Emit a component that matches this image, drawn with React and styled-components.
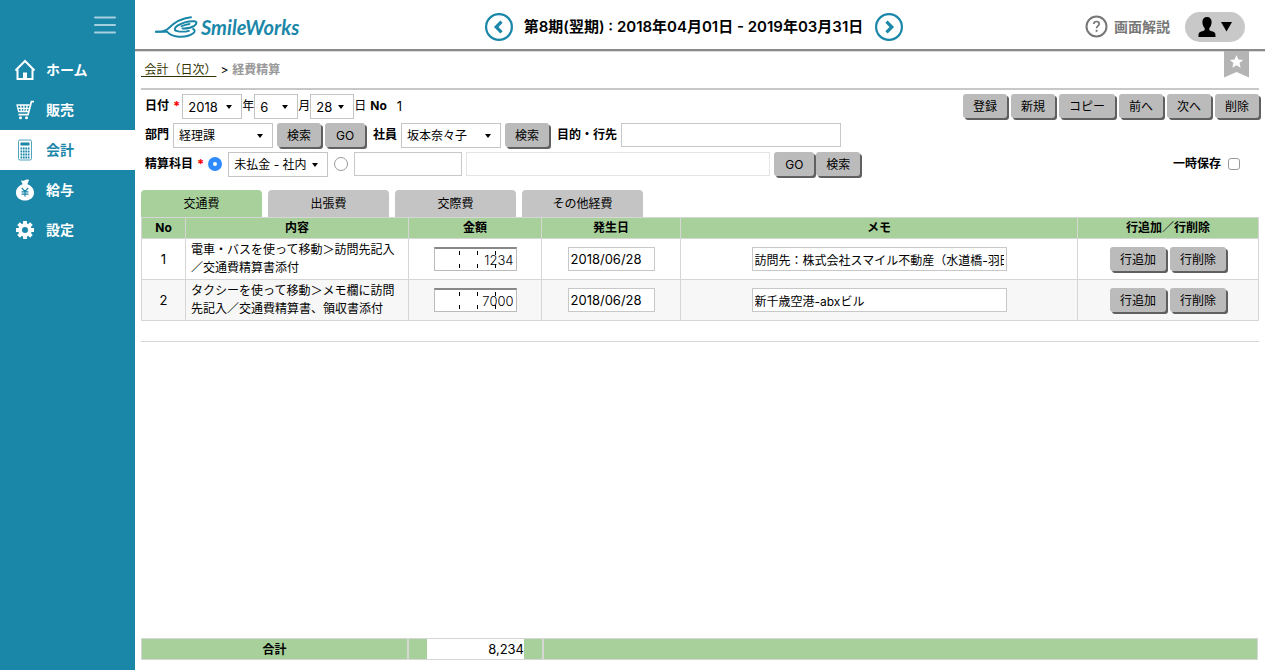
import React, { useState } from "react";
import styled, { createGlobalStyle } from "styled-components";

const teal = "#1a87a9";
const green = "#a7d09b";
const line = "#d6d6d6";

const GlobalStyle = createGlobalStyle`
  * { box-sizing: border-box; }
  body {
    margin: 0;
    background: #fff;
    color: #000;
    font-family: Inter, "Noto Sans CJK JP", sans-serif;
    font-size: 12px;
    line-height: 18px;
  }
  input, select, button { font: inherit; color: inherit; }
`;

const Page = styled.div`
  display: flex;
  min-height: 100vh;
`;

/* ---------- sidebar ---------- */
const Sidebar = styled.nav`
  flex: 0 0 135px;
  background: ${teal};
`;
const MenuBar = styled.div`
  display: flex;
  justify-content: flex-end;
  align-items: center;
  height: 50px;
  padding-right: 19px;
`;
const IconButton = styled.button`
  display: flex;
  padding: 0;
  border: 0;
  background: none;
  cursor: pointer;
`;
const NavLink = styled.a`
  display: flex;
  align-items: center;
  gap: 10px;
  height: 40px;
  padding-left: 14px;
  font-size: 14px;
  font-weight: 700;
  text-decoration: none;
  color: ${(p) => (p.$active ? teal : "#fff")};
  background: ${(p) => (p.$active ? "#fff" : "transparent")};
`;

/* ---------- header ---------- */
const Main = styled.main`
  flex: 1;
  min-width: 0;
  display: flex;
  flex-direction: column;
`;
const Header = styled.header`
  display: flex;
  align-items: center;
  justify-content: space-between;
  height: 51px;
  padding: 4px 20px 0;
  border-bottom: 2px solid #8a8a8a;
  box-shadow: 0 1px 0 #dcdcdc;
`;
const Logo = styled.a`
  display: flex;
  align-items: center;
  gap: 3px;
  width: 147px;
  color: ${teal};
  font-family: Lato, sans-serif;
  font-size: 20px;
  font-weight: 700;
  font-style: italic;
  text-decoration: none;
`;
const Period = styled.div`
  display: flex;
  align-items: center;
  gap: 6px;
`;
const PeriodTitle = styled.h1`
  min-width: 350px;
  margin: 0;
  font-size: 15px;
  font-weight: 600;
  text-align: center;
  white-space: nowrap;
`;
const HeaderTools = styled.div`
  display: flex;
  align-items: center;
`;
const HelpLink = styled.a`
  display: flex;
  align-items: center;
  gap: 6px;
  margin-right: 15px;
  color: #777;
  font-size: 14px;
  font-weight: 700;
  text-decoration: none;
`;
const UserButton = styled.button`
  display: flex;
  align-items: center;
  justify-content: center;
  gap: 5px;
  width: 60px;
  height: 30px;
  padding: 0;
  border: 0;
  border-radius: 15px;
  background: #c8c8c8;
`;

/* ---------- content ---------- */
const Content = styled.div`
  flex: 1;
  display: flex;
  flex-direction: column;
  padding: 0 6px 10px;
`;
const CrumbBar = styled.div`
  display: flex;
  justify-content: space-between;
  height: 39px;
  padding-right: 10px;
  border-bottom: 2px solid #c8c8c8;
  line-height: 37px;
`;
const Crumbs = styled.div`
  display: flex;
  gap: 4px;
  white-space: pre;
  strong { color: #999; }
`;
const CrumbLink = styled.a`
  color: #330;
  text-decoration: underline;
  text-underline-offset: 2px;
`;

const FormArea = styled.form`
  display: flex;
  justify-content: space-between;
  padding: 4px 0 12px;
`;
const Fields = styled.div`
  display: flex;
  flex-direction: column;
  gap: 3px;
  padding-left: 4px;
`;
const Row = styled.div`
  display: flex;
  align-items: flex-start;
  height: 26px;
  white-space: nowrap;
  line-height: 24px;
`;
const Label = styled.label`
  font-weight: 700;
  margin-left: ${(p) => p.$before || 0}px;
  margin-right: 4px;
`;
const Required = styled.span`
  margin-right: 2px;
  color: #f00;
  font-size: 13px;
  font-weight: 700;
`;
const SelectBox = styled.span`
  position: relative;
  display: inline-flex;
  width: ${(p) => p.$width}px;
  height: 25px;
  &::after {
    content: "";
    position: absolute;
    right: 10px;
    top: 11px;
    border: 3px solid transparent;
    border-top: 4px solid #000;
    border-bottom: 0;
    pointer-events: none;
  }
`;
const NativeSelect = styled.select`
  appearance: none;
  width: 100%;
  padding: 0 0 2px 5px;
  border: 1px solid #c4c4c4;
  border-radius: 0;
  background: #fff;
  font-size: ${(p) => (p.$numeric ? "13px" : "12px")};
`;
const TextInput = styled.input`
  width: ${(p) => p.$width}px;
  max-width: 100%;
  height: 24px;
  padding: 0 2px;
  border: 1px solid ${(p) => (p.$faint ? "#e4e4e4" : "#c8c8c8")};
  background: #fff;
  font-size: ${(p) => (p.$numeric ? "13px" : "12px")};
`;
const Button = styled.button`
  min-width: 40px;
  height: 24px;
  padding: 2px 10px 0;
  border: 0;
  border-radius: 3px;
  background: #bbb;
  box-shadow: 2px 2px 0 #606060;
  line-height: 22px;
  white-space: nowrap;
`;
const ButtonGroup = styled.div`
  display: flex;
  justify-content: ${(p) => (p.$center ? "center" : "flex-start")};
  gap: ${(p) => (p.$tight ? 2 : 4)}px;
  margin-left: ${(p) => (p.$inline ? "4px" : "0")};
`;
const Radio = styled.input`
  appearance: none;
  width: 14px;
  height: 14px;
  margin: 5px 6px 0 2px;
  border: 1px solid #999;
  border-radius: 50%;
  background: #fff;
  &:checked {
    border: 5px solid #2f8bfb;
  }
`;
const AccountRow = styled(Row)`
  ${SelectBox} { margin-right: 4px; }
`;
const CodeFields = styled.div`
  display: flex;
  gap: 4px;
`;
const NumberText = styled.span`
  margin-left: 6px;
  font-size: 13px;
`;
const Checkbox = styled.input`
  appearance: none;
  width: 12px;
  height: 12px;
  margin: 6px 0 0;
  border: 1px solid #999;
  border-radius: 3px;
  background: #fff;
  &:checked { background: #2f8bfb; }
`;
const Side = styled.div`
  display: flex;
  flex-direction: column;
  justify-content: space-between;
  align-items: flex-end;
`;
const DraftField = styled.div`
  display: flex;
  gap: 3px;
  height: 26px;
  padding-right: 19px;
  line-height: 24px;
`;

const Tabs = styled.div`
  display: flex;
  gap: 6px;
`;
const Tab = styled.button`
  width: 121px;
  height: 27px;
  padding: 0;
  border: 0;
  border-radius: 4px 4px 0 0;
  background: ${(p) => (p.$active ? green : "#c4c4c4")};
`;

const Table = styled.table`
  width: 100%;
  table-layout: fixed;
  border-collapse: collapse;
  th, td { border: 1px solid ${line}; }
  th {
    height: 21px;
    padding: 0;
    background: ${green};
    line-height: 18px;
  }
  td {
    height: 41px;
    padding: 2px 5px;
    text-align: center;
  }
  tbody tr:nth-child(even) { background: #f7f7f7; }
`;
const Col = styled.col`
  width: ${(p) => (p.$width ? p.$width + "px" : "auto")};
`;
const NumberCell = styled.td`
  font-size: 13px;
`;
const DetailCell = styled.td`
  && { text-align: left; }
`;
const AmountInput = styled.input`
  display: block;
  width: 83px;
  height: 24px;
  margin: 0 auto;
  padding: 0 2px;
  border: 1px solid #bbb;
  border-top: 2px solid #888;
  font-size: 13px;
  font-weight: 300;
  text-align: right;
  background-color: #fff;
  background-image: linear-gradient(#000, #000), linear-gradient(#000, #000),
    linear-gradient(#000, #000), linear-gradient(#000, #000), linear-gradient(#000, #000),
    linear-gradient(#000, #000);
  background-repeat: no-repeat;
  background-size: 1px 4px;
  background-position: 24px 2px, 24px 15px, 42px 2px, 42px 15px, 60px 2px, 60px 15px;
`;
const Divider = styled.hr`
  width: 100%;
  margin: 20px 0 0;
  border: 0;
  border-top: 1px solid ${line};
`;

const Totals = styled.div`
  display: flex;
  height: 22px;
  margin: auto 1px 0 0;
  border: 1px solid ${line};
  background: ${green};
  line-height: 20px;
`;
const TotalLabel = styled.div`
  width: 267px;
  border-right: 2px solid ${line};
  font-weight: 700;
  line-height: 22px;
  text-align: center;
`;
const TotalAmount = styled.div`
  display: flex;
  width: 135px;
  padding: 0 18px;
  border-right: 2px solid ${line};
  output {
    flex: 1;
    background: #fff;
    font-size: 13px;
    text-align: right;
  }
`;

/* ---------- drawings ---------- */
const MenuIcon = () => (
  <svg width="22" height="18" viewBox="0 0 22 18" stroke="#a5d0dd" strokeWidth="2" strokeLinecap="round">
    <path d="M1 1.5h20M1 9h20M1 16.5h20" />
  </svg>
);
const HomeIcon = () => (
  <svg width="22" height="22" viewBox="0 0 22 22" fill="none">
    <path d="M1.5 11.5 11 2l9.500 9.500M3.500 10.500V20h15v-9.500" stroke="#fff" strokeWidth="2" />
    <path d="M9 13.500h4V20H9z" fill="#fff" />
  </svg>
);
const CartIcon = () => (
  <svg width="22" height="22" viewBox="0 0 22 22" fill="none" stroke="#fff">
    <path d="M20 2.700h-2.600l-3.400 13H4.500" strokeWidth="1.700" />
    <path d="M2.500 6h13.200M3.300 9.300h11.500M4 12.500h10M3 6l1.700 6.500M6.600 6l.9 6.500M9.900 6v6.500M13.200 6l-1 6.500" strokeWidth="1.300" />
    <circle cx="6.500" cy="18.700" r="1.500" fill="#fff" stroke="none" />
    <circle cx="12.500" cy="18.700" r="1.500" fill="#fff" stroke="none" />
  </svg>
);
const CalcIcon = () => (
  <svg width="22" height="22" viewBox="0 0 22 22" fill="none">
    <rect x="4.500" y="1" width="13" height="20" rx="1.500" stroke={teal} strokeOpacity=".75" />
    <path d="M6.500 3.500h9v3h-9z" fill={teal} />
    <path
      d="M6.500 9.500h9M6.500 12.500h9M6.500 15.500h9M6.500 18.500h9"
      stroke={teal}
      strokeWidth="2"
      strokeDasharray="1.700 .73"
    />
  </svg>
);
const BagIcon = () => (
  <svg width="22" height="22" viewBox="0 0 22 22">
    <path
      d="M7 1.700c1.300-.8 2.100.4 3.300-.2 1.200-.8 3-1.300 4.700-.6L13.300 5.200c3.900 1.300 6.700 4.400 6.700 8.500 0 4.800-4 7.800-9 7.800s-9-3-9-7.800c0-4.100 2.800-7.200 6.700-8.500z"
      fill="#fff"
    />
    <path d="m7.800 8.800 3.200 3.700 3.200-3.700M11 12.500v5M7.500 12.800h7M7.500 15.200h7" fill="none" stroke={teal} strokeWidth="1.200" />
  </svg>
);
const GearIcon = () => (
  <svg width="22" height="22" viewBox="0 0 22 22" fill="none" stroke="#fff">
    <circle cx="11" cy="11" r="4.900" strokeWidth="3.800" />
    <path
      d="M11 2v3M11 17v3M2 11h3M17 11h3M4.600 4.600l2.200 2.200M15.200 15.200l2.200 2.200M17.400 4.600l-2.200 2.200M6.800 15.200l-2.200 2.200"
      strokeWidth="3.800"
    />
  </svg>
);
const WingIcon = () => (
  <svg width="43" height="22" viewBox="0 0 43 22" fill="none" stroke={teal} strokeLinecap="round">
    <path d="M1 15.800c5 .3 9-.4 12-3C17.500 8 24 2.300 36 1.200" strokeWidth="2" />
    <path d="M1 15.600c4 .3 8 .1 11 .1 2 2.300 5 4.300 10 4.800 6.500.6 13-.6 16.500-3.500 1.700-1.500 1.600-3.200-.4-4" strokeWidth="1.900" />
    <path d="M21 14.700c-2-.8-1.500-3 1.500-5C27 6.800 33 5 39 5.200c3.200.1 3.200 2.500.3 4.600-3 2-7.300 2.800-11.800 2.600" strokeWidth="2" />
    <path d="M26.500 10.300c2.600-1.200 5.200-1.900 8-2.300M21.500 14.800c4 1.300 8.500 1 12.500 0" strokeWidth="1.800" />
  </svg>
);
const ArrowIcon = ({ next }) => (
  <svg width="28" height="28" viewBox="0 0 28 28" fill="none" stroke={teal}>
    <circle cx="14" cy="14" r="12.900" strokeWidth="2.200" />
    <path d={next ? "m11.500 8.700 5.300 5.300-5.300 5.300" : "m16.500 8.700-5.300 5.300 5.300 5.300"} strokeWidth="3.200" />
  </svg>
);
const HelpIcon = () => (
  <svg width="23" height="23" viewBox="0 0 23 23" fill="none" stroke="#777">
    <circle cx="11.500" cy="11.500" r="10" strokeWidth="2" />
    <path d="M8.700 9c.2-1.700 1.300-2.500 2.800-2.500s2.700.9 2.700 2.400c0 1.900-2.600 2-2.600 4.300" strokeWidth="1.700" />
    <circle cx="11.600" cy="15.800" r="1.100" fill="#777" stroke="none" />
  </svg>
);
const UserIcon = () => (
  <svg width="18" height="20" viewBox="0 0 18 20">
    <path d="M9 0c3 0 4.600 2 4.600 5 0 2.600-.9 4.700-2.300 6v1.400c0 1 1 1.300 2.600 1.900 2.300.8 3.600 1.500 3.600 3.700v2h-17v-2c0-2.200 1.300-2.900 3.600-3.700 1.600-.6 2.600-.9 2.600-1.900V11C5.300 9.700 4.400 7.600 4.400 5 4.400 2 6 0 9 0z" />
  </svg>
);
const CaretIcon = () => (
  <svg width="11" height="10" viewBox="0 0 11 10">
    <path d="M0 0h11L5.500 9.500z" />
  </svg>
);
const BookmarkIcon = () => (
  <svg width="25" height="27" viewBox="0 0 25 27">
    <path d="M0 0h25v26.500l-12.500-5.500L0 26.500z" fill="#b4b4b4" />
    <path d="m12.500 4 1.900 4.500 4.800.4-3.700 3.100 1.200 4.800-4.200-2.600-4.200 2.600 1.200-4.800-3.700-3.100 4.800-.4z" fill="#fff" />
  </svg>
);

const navItems = [
  { label: "ホーム", Icon: HomeIcon },
  { label: "販売", Icon: CartIcon },
  { label: "会計", Icon: CalcIcon, active: true },
  { label: "給与", Icon: BagIcon },
  { label: "設定", Icon: GearIcon },
];
const actions = ["登録", "新規", "コピー", "前へ", "次へ", "削除"];
const tabs = ["交通費", "出張費", "交際費", "その他経費"];
const columns = [
  { title: "No", width: 44 },
  { title: "内容", width: 223 },
  { title: "金額", width: 133 },
  { title: "発生日", width: 139 },
  { title: "メモ" },
  { title: "行追加／行削除", width: 181 },
];
const rows = [
  {
    detail: "電車・バスを使って移動＞訪問先記入／交通費精算書添付",
    amount: "1234",
    date: "2018/06/28",
    memo: "訪問先：株式会社スマイル不動産（水道橋-羽田空港）",
  },
  {
    detail: "タクシーを使って移動＞メモ欄に訪問先記入／交通費精算書、領収書添付",
    amount: "7000",
    date: "2018/06/28",
    memo: "新千歳空港-abxビル",
  },
];

const Select = ({ id, width, numeric, label, children }) => (
  <SelectBox $width={width}>
    <NativeSelect id={id} $numeric={numeric} aria-label={label}>
      <option>{children}</option>
    </NativeSelect>
  </SelectBox>
);

export default function App() {
  const [tab, setTab] = useState(tabs[0]);
  return (
    <Page>
      <GlobalStyle />
      <Sidebar>
        <MenuBar>
          <IconButton aria-label="メニュー"><MenuIcon /></IconButton>
        </MenuBar>
        {navItems.map(({ label, Icon, active }) => (
          <NavLink key={label} href="#" $active={active}>
            <Icon />
            {label}
          </NavLink>
        ))}
      </Sidebar>
      <Main>
        <Header>
          <Logo href="#"><WingIcon />SmileWorks</Logo>
          <Period>
            <IconButton aria-label="前の期"><ArrowIcon /></IconButton>
            <PeriodTitle>第8期(翌期) : 2018年04月01日 - 2019年03月31日</PeriodTitle>
            <IconButton aria-label="次の期"><ArrowIcon next /></IconButton>
          </Period>
          <HeaderTools>
            <HelpLink href="#"><HelpIcon />画面解説</HelpLink>
            <UserButton aria-label="ユーザー"><UserIcon /><CaretIcon /></UserButton>
          </HeaderTools>
        </Header>
        <Content>
          <CrumbBar>
            <Crumbs>
              <CrumbLink href="#"> 会計（日次）</CrumbLink>
              <span>&gt;</span>
              <strong>経費精算</strong>
            </Crumbs>
            <BookmarkIcon />
          </CrumbBar>
          <FormArea onSubmit={(e) => e.preventDefault()}>
            <Fields>
              <Row>
                <Label htmlFor="year">日付</Label>
                <Required>*</Required>
                <Select id="year" width={60} numeric>2018</Select>
                年
                <Select width={44} numeric label="月">6</Select>
                月
                <Select width={44} numeric label="日">28</Select>
                日
                <Label as="span" $before={4}>No</Label>
                <NumberText>1</NumberText>
              </Row>
              <Row>
                <Label htmlFor="dept">部門</Label>
                <Select id="dept" width={100}>経理課</Select>
                <ButtonGroup $inline>
                  <Button>検索</Button>
                  <Button>GO</Button>
                </ButtonGroup>
                <Label htmlFor="staff" $before={8}>社員</Label>
                <Select id="staff" width={100}>坂本奈々子</Select>
                <ButtonGroup $inline>
                  <Button>検索</Button>
                </ButtonGroup>
                <Label htmlFor="purpose" $before={8}>目的・行先</Label>
                <TextInput id="purpose" $width={220} />
              </Row>
              <AccountRow>
                <Label htmlFor="account">精算科目</Label>
                <Required>*</Required>
                <Radio type="radio" name="account-kind" defaultChecked aria-label="科目を選択" />
                <Select id="account" width={100}>未払金 - 社内</Select>
                <Radio type="radio" name="account-kind" aria-label="コードで指定" />
                <CodeFields>
                  <TextInput $width={108} aria-label="コード" />
                  <TextInput $width={304} $faint aria-label="名称" readOnly />
                </CodeFields>
                <ButtonGroup $inline $tight>
                  <Button>GO</Button>
                  <Button>検索</Button>
                </ButtonGroup>
              </AccountRow>
            </Fields>
            <Side>
              <ButtonGroup>
                {actions.map((a) => <Button key={a}>{a}</Button>)}
              </ButtonGroup>
              <DraftField>
                <Label htmlFor="draft">一時保存</Label>
                <Checkbox id="draft" type="checkbox" />
              </DraftField>
            </Side>
          </FormArea>
          <Tabs role="tablist">
            {tabs.map((t) => (
              <Tab key={t} role="tab" $active={t === tab} aria-selected={t === tab} onClick={() => setTab(t)}>
                {t}
              </Tab>
            ))}
          </Tabs>
          <Table>
            <colgroup>
              {columns.map((c) => <Col key={c.title} $width={c.width} />)}
            </colgroup>
            <thead>
              <tr>{columns.map((c) => <th key={c.title}>{c.title}</th>)}</tr>
            </thead>
            <tbody>
              {rows.map((r, i) => (
                <tr key={r.amount}>
                  <NumberCell>{i + 1}</NumberCell>
                  <DetailCell>{r.detail}</DetailCell>
                  <td><AmountInput defaultValue={r.amount} aria-label="金額" /></td>
                  <td><TextInput $width={87} $numeric defaultValue={r.date} aria-label="発生日" /></td>
                  <td><TextInput $width={255} defaultValue={r.memo} aria-label="メモ" /></td>
                  <td>
                    <ButtonGroup $center>
                      <Button>行追加</Button>
                      <Button>行削除</Button>
                    </ButtonGroup>
                  </td>
                </tr>
              ))}
            </tbody>
          </Table>
          <Divider />
          <Totals>
            <TotalLabel>合計</TotalLabel>
            <TotalAmount><output>8,234</output></TotalAmount>
          </Totals>
        </Content>
      </Main>
    </Page>
  );
}
